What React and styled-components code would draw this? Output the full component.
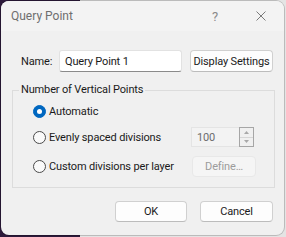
import React from 'react';
import styled, { createGlobalStyle } from 'styled-components';

const Global = createGlobalStyle`
  html, body {
    margin: 0;
    padding: 0;
    width: 286px;
    height: 237px;
    overflow: hidden;
  }
  body {
    background: linear-gradient(to right, #2d1a3b 80px, #e4e4e4 80px);
    font-family: Roboto, "Liberation Sans", sans-serif;
    font-size: 11px;
    letter-spacing: -0.15px;
    color: #1a1a1a;
  }
`

const Window = styled.div`
  margin: 1px 0 0 1px;
  width: 283px;
  height: 234px;
  background: #f0f0f0;
  border-radius: 8px;
  box-shadow: 0 0 0 1px rgba(0, 0, 0, 0.18);
  overflow: hidden;
  display: flex;
  flex-direction: column;
`

const TitleBar = styled.div`
  height: 30px;
  flex: none;
  display: flex;
  align-items: center;
  background: #f3f3f3;
  padding-left: 10px;
`

const Title = styled.div`
  flex: 1;
  color: #6e6e6e;
  font-size: 12px;
  letter-spacing: 0;
`

const TitleButton = styled.div`
  width: 46px;
  height: 30px;
  display: flex;
  align-items: center;
  justify-content: center;
  color: #8a8a8a;
  font-size: 13px;
`

const Content = styled.div`
  flex: 1;
  display: flex;
  flex-direction: column;
  padding: 19px 9px 0 11px;
`

const NameRow = styled.div`
  display: flex;
  align-items: center;
  height: 22px;
  padding-left: 9px;
`

const NameLabel = styled.label`
  width: 38px;
`

const TextInput = styled.div`
  width: 123px;
  height: 22px;
  box-sizing: border-box;
  display: flex;
  align-items: center;
  padding-left: 5px;
  background: #fff;
  border: 1px solid #e2e2e2;
  border-bottom-color: #8a8a8a;
  border-radius: 3px;
`

const Button = styled.div`
  width: ${p => p.w}px;
  height: ${p => p.h || 21}px;
  box-sizing: border-box;
  display: flex;
  align-items: center;
  justify-content: center;
  background: ${p => (p.disabled ? '#f5f5f5' : '#fdfdfd')};
  border: 1px solid ${p => (p.disabled ? '#e8e8e8' : '#d0d0d0')};
  border-bottom-color: ${p => (p.disabled ? '#e8e8e8' : '#bcbcbc')};
  border-radius: 4px;
  color: ${p => (p.disabled ? '#9c9c9c' : '#1a1a1a')};
  margin-left: ${p => p.ml || 0}px;
`

const Group = styled.fieldset`
  margin: 10px 0 0 0;
  padding: 3px 0 10px 20px;
  border: 1px solid #dcdcdc;
  min-width: 0;
`

const Legend = styled.legend`
  margin-left: -14px;
  padding: 0 2px;
  font-size: 11px;
  line-height: 16px;
`

const OptionRow = styled.div`
  display: grid;
  grid-template-columns: 158px auto;
  align-items: center;
  height: ${p => p.h}px;
  margin-top: ${p => p.mt || 0}px;
`

const Option = styled.label`
  display: flex;
  align-items: center;
  gap: 3px;
`

const Radio = styled.span`
  width: 13px;
  height: 13px;
  box-sizing: border-box;
  border-radius: 50%;
  display: flex;
  align-items: center;
  justify-content: center;
  background: ${p => (p.checked ? '#0067c0' : '#fafafa')};
  border: 1px solid ${p => (p.checked ? '#0067c0' : '#4a4a4a')};
  &::after {
    content: '';
    display: ${p => (p.checked ? 'block' : 'none')};
    width: 5px;
    height: 5px;
    border-radius: 50%;
    background: #fff;
  }
`

const Spinner = styled.div`
  width: 63px;
  height: 20px;
  box-sizing: border-box;
  display: flex;
  background: #f3f3f3;
  border: 1px solid #e4e4e4;
  border-right: none;
`

const SpinValue = styled.div`
  flex: 1;
  display: flex;
  align-items: center;
  padding-left: 5px;
  color: #6d6d6d;
`

const SpinButtons = styled.div`
  width: 13px;
  display: flex;
  flex-direction: column;
  border: 1px solid #a6a6a6;
  margin: -1px 0;
`

const SpinButton = styled.div`
  flex: 1;
  display: flex;
  align-items: center;
  justify-content: center;
  background: #f0f0f0;
  & + & {
    border-top: 1px solid #d6d6d6;
  }
`

const Footer = styled.div`
  display: flex;
  justify-content: flex-end;
  gap: 13px;
  margin-top: 13px;
  padding-right: 2px;
`

const Arrow = ({ up }) => (
  <svg width="5" height="3" viewBox="0 0 5 3">
    <path d={up ? 'M0 3 L2.5 0 L5 3 Z' : 'M0 0 L2.5 3 L5 0 Z'} fill="#a8a8a8" />
  </svg>
)

export default function App() {
  return (
    <>
      <Global />
      <Window>
        <TitleBar>
          <Title>Query Point</Title>
          <TitleButton>?</TitleButton>
          <TitleButton>
            <svg width="10" height="10" viewBox="0 0 10 10">
              <path d="M0.5 0.5 L9.5 9.5 M9.5 0.5 L0.5 9.5" stroke="#7a7a7a" strokeWidth="1" />
            </svg>
          </TitleButton>
        </TitleBar>
        <Content>
          <NameRow>
            <NameLabel>Name:</NameLabel>
            <TextInput>Query Point 1</TextInput>
            <Button w={83} h={22} ml={8}>Display Settings</Button>
          </NameRow>
          <Group>
            <Legend>Number of Vertical Points</Legend>
            <OptionRow h={20}>
              <Option><Radio checked />Automatic</Option>
            </OptionRow>
            <OptionRow h={20} mt={6}>
              <Option><Radio />Evenly spaced divisions</Option>
              <Spinner>
                <SpinValue>100</SpinValue>
                <SpinButtons>
                  <SpinButton><Arrow up /></SpinButton>
                  <SpinButton><Arrow /></SpinButton>
                </SpinButtons>
              </Spinner>
            </OptionRow>
            <OptionRow h={21} mt={9}>
              <Option><Radio />Custom divisions per layer</Option>
              <Button w={64} disabled ml={1}>Define…</Button>
            </OptionRow>
          </Group>
          <Footer>
            <Button w={72}>OK</Button>
            <Button w={73}>Cancel</Button>
          </Footer>
        </Content>
      </Window>
    </>
  );
}
